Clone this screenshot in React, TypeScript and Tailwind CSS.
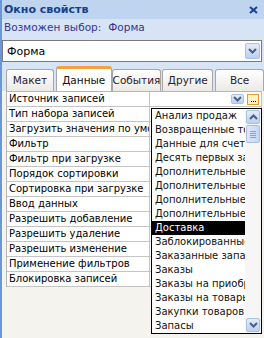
import React from "react";

const rows = [
  "Источник записей",
  "Тип набора записей",
  "Загрузить значения по умолчанию",
  "Фильтр",
  "Фильтр при загрузке",
  "Порядок сортировки",
  "Сортировка при загрузке",
  "Ввод данных",
  "Разрешить добавление",
  "Разрешить удаление",
  "Разрешить изменение",
  "Применение фильтров",
  "Блокировка записей",
];

const items = [
  "Анализ продаж",
  "Возвращенные товары",
  "Данные для счета",
  "Десять первых заказов",
  "Дополнительные сведения",
  "Дополнительные сведения о",
  "Дополнительные сведения по",
  "Дополнительные данные",
  "Доставка",
  "Заблокированные заказы",
  "Заказанные запасы",
  "Заказы",
  "Заказы на приобретение",
  "Заказы на товары",
  "Закупки товаров",
  "Запасы",
];

const tabs = [
  { label: "Макет", w: "w-[48px]", ml: "ml-[4px]" },
  { label: "Данные", w: "w-[56px]", ml: "ml-[2px]", active: true },
  { label: "События", w: "w-[50px]", ml: "ml-0" },
  { label: "Другие", w: "w-[51px]", ml: "ml-[1px]" },
  { label: "Все", w: "w-[49px]", ml: "ml-[2px]" },
];

function Chevron({ up = false }: { up?: boolean }) {
  return (
    <svg width="9" height="6" viewBox="0 0 9 6">
      <path
        d={up ? "M1 5 L4.5 1.5 L8 5" : "M1 1 L4.5 4.5 L8 1"}
        fill="none"
        stroke="#4a5f85"
        strokeWidth="2"
      />
    </svg>
  );
}

function BlueButton({ up = false, cls = "" }: { up?: boolean; cls?: string }) {
  return (
    <div
      className={`flex items-center justify-center rounded-[2px] border border-[#a9bfe3] bg-gradient-to-b from-[#e4ecfa] to-[#bccff0] ${cls}`}
    >
      <Chevron up={up} />
    </div>
  );
}

export default function App() {
  return (
    <div className="relative flex h-[338px] w-[264px] flex-col overflow-hidden border-l-2 border-[#6b97d2] bg-[#f4f3ee] font-['DejaVu_Sans',sans-serif] text-[10px] leading-none text-black">
      {/* title */}
      <div className="flex h-[19px] shrink-0 items-center justify-between bg-[#bfd4ef] pl-[2px] pr-[6px]">
        <span className="text-[11px] font-bold text-[#15428b]">Окно свойств</span>
        <svg width="9" height="8" viewBox="0 0 9 8">
          <path d="M1 1 L8 7 M8 1 L1 7" stroke="#15428b" strokeWidth="2" />
        </svg>
      </div>

      {/* selection type */}
      <div className="flex h-[17px] shrink-0 items-center bg-[#d6e4f6] pl-[2px] text-[10.5px] text-[#35358f]">
        <span>Возможен выбор:</span>
        <span className="ml-[7px]">Форма</span>
      </div>

      {/* combo + tabs */}
      <div className="flex shrink-0 flex-col bg-[#d6e4f6] pt-[4px]">
        <div className="mr-[2px] flex h-[22px] items-center justify-between border border-[#7a7a7a] bg-white pl-[4px] pr-[1px]">
          <span className="text-[11px]">Форма</span>
          <BlueButton cls="h-[16px] w-[15px]" />
        </div>

        <div className="mt-[4px] flex h-[25px] items-end">
          {tabs.map((t) =>
            t.active ? (
              <div
                key={t.label}
                className={`${t.w} ${t.ml} flex h-[25px] items-center justify-center rounded-t-[3px] border-x border-t-[3px] border-x-[#a7a7a7] border-t-[#f0a33a] bg-white text-[10.5px] text-[#111]`}
              >
                {t.label}
              </div>
            ) : (
              <div
                key={t.label}
                className={`${t.w} ${t.ml} flex h-[22px] items-center justify-center overflow-hidden whitespace-nowrap rounded-t-[3px] border-x border-t border-[#a7a7a7] bg-gradient-to-b from-white to-[#ebeae5] text-[10.5px] text-[#2a2030]`}
              >
                {t.label}
              </div>
            )
          )}
        </div>
      </div>

      {/* property grid */}
      <div className="flex flex-1 flex-col bg-[#f4f3ee] pl-[4px] pr-[2px]">
        <div className="flex flex-col border-l border-t border-[#b5b5b5] bg-white">
          {rows.map((r, i) => (
            <div key={r} className="flex h-[15px] border-b border-[#c4c4c4]">
              <div className="flex w-[143px] items-center overflow-hidden whitespace-nowrap border-r border-[#c4c4c4] pl-[2px]">
                {r}
              </div>
              <div className="flex flex-1 items-center justify-end border-r border-[#c4c4c4] pr-[2px]">
                {i === 0 && (
                  <div className="flex items-center gap-[3px]">
                    <BlueButton cls="h-[10px] w-[13px]" />
                    <div className="flex h-[11px] w-[12px] items-end justify-center border border-[#e59a2f] bg-[#fff1c2] pb-[2px]">
                      <div className="flex gap-[1px]">
                        <div className="h-[1px] w-[1px] bg-black" />
                        <div className="h-[1px] w-[1px] bg-black" />
                        <div className="h-[1px] w-[1px] bg-black" />
                      </div>
                    </div>
                  </div>
                )}
              </div>
            </div>
          ))}
        </div>
      </div>

      {/* open dropdown list */}
      <div className="absolute left-[149px] top-[108px] flex h-[226px] w-[111px] border border-black bg-white">
        <div className="flex min-w-0 flex-1 flex-col overflow-hidden">
          {items.map((it) => (
            <div
              key={it}
              className={`flex h-[14px] items-center whitespace-nowrap pl-[3px] text-[10px] ${
                it === "Доставка" ? "bg-black text-white" : "text-[#111]"
              }`}
            >
              {it}
            </div>
          ))}
        </div>
        <div className="flex w-[16px] shrink-0 flex-col bg-[#f6f6f6] p-[1px]">
          <BlueButton up cls="h-[14px] w-[14px]" />
          <div className="mt-[1px] flex h-[18px] w-[14px] flex-col items-center justify-center gap-[1px] rounded-[2px] border border-[#a9bfe3] bg-gradient-to-r from-[#dde7f9] to-[#c6d6f3]">
            <div className="h-[1px] w-[6px] bg-[#8aa2cc]" />
            <div className="h-[1px] w-[6px] bg-[#8aa2cc]" />
            <div className="h-[1px] w-[6px] bg-[#8aa2cc]" />
            <div className="h-[1px] w-[6px] bg-[#8aa2cc]" />
          </div>
          <div className="flex-1" />
          <BlueButton cls="h-[14px] w-[14px]" />
        </div>
      </div>
    </div>
  );
}
